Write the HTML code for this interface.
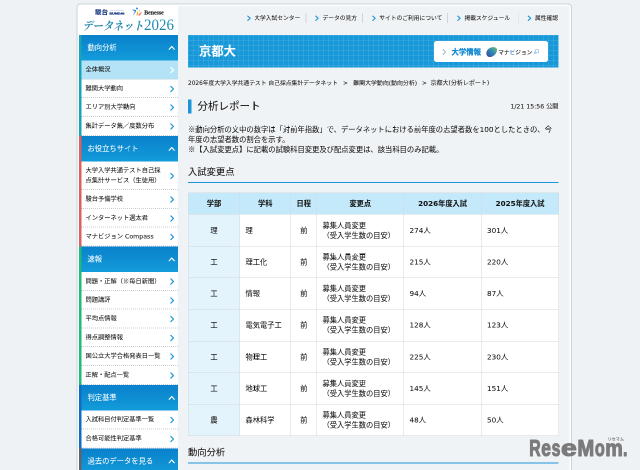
<!DOCTYPE html>
<html lang="ja">
<head>
<meta charset="utf-8">
<title>京都大 分析レポート</title>
<style>
*{box-sizing:border-box;margin:0;padding:0}
html,body{width:640px;height:470px;overflow:hidden;background:#eef2f5}
body{text-spacing-trim:space-all;font-family:"DejaVu Sans","Liberation Sans","Noto Sans CJK JP",sans-serif;color:#141414;font-weight:400;-webkit-text-stroke:.1px}
#s{will-change:transform;position:absolute;left:0;top:0;width:1280px;height:940px;transform:scale(.5);transform-origin:0 0;overflow:hidden;background:#eef2f5}
#wrap{position:absolute;left:153px;top:7px;width:991px;height:960px;border:2px solid #c9d3d9;border-radius:8px;background:#f0f3f5;box-shadow:inset 0 0 0 3px #fff}
/* sidebar */
#side{position:absolute;left:0;top:0;width:201px;height:960px;background:#fff;border-radius:7px 0 0 0}
#logo{position:relative;width:200px;height:61px}
.sec{position:relative;margin-left:3px;padding-left:5px;width:198px}
.sec .bar{position:absolute;left:0;top:0;bottom:0;width:5px}
.sh{height:51.2px;background:linear-gradient(#0a80cb,#129cda);color:#fff;font-size:14.6px;line-height:49.5px;padding-left:12px;position:relative}
.sh svg{position:absolute;right:6px;top:21px}
.si{height:37.6px;border-bottom:2px dotted #c6d0d7;font-size:12.5px;line-height:16px;padding:10px 0 0 8px;position:relative;color:#141414;background:#fff}
.si.two{height:57.4px;line-height:20px;padding-top:8.5px}
.si.act{background:#b4e3f7}
.sec:nth-of-type(4) .si{height:38.3px}
.si svg{position:absolute;right:7px;top:12px}
.si.two svg{top:22px}
/* main */
#main{position:absolute;left:221px;top:0;width:741px;height:960px}
#nav{position:absolute;left:0;top:17px;width:741px;height:20px;font-size:11.5px;white-space:nowrap;line-height:20px;color:#141414}
#nav span{display:block;position:absolute;top:0;padding-left:15px}
#nav i{position:absolute;top:0;width:1.5px;height:20px;background:#cfd6da}
#nav svg{position:absolute;left:0;top:5px}
#banner{position:absolute;left:0;top:61px;width:741px;height:65px;background-color:#1798d8;
background-image:linear-gradient(rgba(255,255,255,.09) 2px,transparent 2px),linear-gradient(90deg,rgba(255,255,255,.09) 2px,transparent 2px);background-size:10px 10px}
#banner h1{position:absolute;left:22px;top:0;line-height:65.5px;font-size:24.6px;color:#fff;font-weight:bold}
#mv{position:absolute;left:492px;top:12px;width:228px;height:42px;background:#fff;border-radius:5px}
#bc{position:absolute;left:0;top:147px;font-size:11.5px;line-height:20px;white-space:nowrap;color:#141414}
#bc span,#bc i{position:absolute;top:0;font-style:normal}
#h2{position:absolute;left:0;top:190px;height:28px;border-left:7px solid #1a96d8;padding-left:12px;font-size:21px;line-height:27px;color:#141414}
#date{position:absolute;right:0;top:194px;font-size:12.4px;line-height:20px;color:#141414}
#notes{position:absolute;left:0;top:239px;width:760px;font-size:14.6px;line-height:19.6px;color:#141414}
.h3{position:absolute;left:0;width:741px;height:37px;border-bottom:2.5px solid #1a96d8;font-size:18.6px;line-height:30px;color:#141414}
table{position:absolute;left:0;top:376.4px;width:741px;border-collapse:collapse;table-layout:fixed;font-size:14.5px;line-height:20px;color:#141414}
td,th{border:1.5px solid #d2d8dc;vertical-align:middle}
th{height:43px;background:#c3e9fa;font-weight:bold;font-size:14.4px}
td{height:63.3px;background:#fff;padding-left:11px;text-align:left}
td.c{text-align:center;padding-left:0}
td.f{background:#e4f4fc}
u{text-decoration:none;font-family:"Noto Sans CJK JP",sans-serif}
</style>
</head>
<body>
<div id="s">
<div id="wrap">
 <div id="side">
  <svg id="logo" width="200" height="61" viewBox="0 0 200 61" style="display:block">
   <defs><linearGradient id="lg" x1="0" y1="0" x2="0" y2="1"><stop offset="0" stop-color="#1a9cc2"/><stop offset="1" stop-color="#27799c"/></linearGradient></defs>
   <text x="35" y="20" font-family="'Noto Sans CJK JP',sans-serif" font-weight="900" font-size="12.500" fill="#1d3f86" textLength="26" lengthAdjust="spacingAndGlyphs">駿台</text>
   <rect x="65" y="12.200" width="28" height="0.8" fill="#a9bbdc"/>
   <text x="63.800" y="20.200" font-family="'Liberation Sans',sans-serif" font-weight="bold" font-size="6.200" fill="#1d3f86" stroke="#1d3f86" stroke-width=".7" textLength="30" lengthAdjust="spacingAndGlyphs">SUNDAI</text>
   <g>
    <path d="M109.500 9 q4 3 8 1.500 q-0.500 6 -7.500 11.500 q4.500 -6 4.500 -9 q-3 0.500 -5 -4z" fill="#1f80d4"/>
    <circle cx="119" cy="7.800" r="1.900" fill="#1f80d4"/>
    <path d="M118 22 q0.200 -6 3 -9 q0.500 4.500 -1 9z" fill="#f5a623"/>
    <path d="M121.500 22 q2 -5.500 8 -7 q-3 3 -5 7z" fill="#ee6a4a"/>
    <circle cx="124" cy="12.500" r="1.500" fill="#f7c531"/>
   </g>
   <text x="133.500" y="20.400" font-family="'Liberation Serif',serif" font-weight="bold" font-size="12.4" fill="#2a2a2a" stroke="#2a2a2a" stroke-width=".35" textLength="39" lengthAdjust="spacingAndGlyphs">Benesse</text>
   <text x="10" y="50.500" font-family="'Noto Serif CJK JP','Noto Serif CJK SC',serif" font-style="italic" font-weight="700" font-size="23.500" fill="url(#lg)" textLength="122" lengthAdjust="spacingAndGlyphs">データネット</text>
   <text x="133" y="51" font-family="'Liberation Serif',serif" font-size="32.500" fill="url(#lg)" textLength="60" lengthAdjust="spacingAndGlyphs">2026</text>
  </svg>
  <div class="sec"><div class="bar" style="background:#19a3b8"></div>
   <div class="sh">動向分析<svg width="13" height="9" viewBox="0 0 13 9"><path d="M1.5 7.5 L6.5 2 L11.5 7.5" fill="none" stroke="#fff" stroke-width="2.4" stroke-linecap="round" stroke-linejoin="round"/></svg></div>
   <div class="si act">全体概況<svg width="9" height="14" viewBox="0 0 9 14"><path d="M1.8 1.8 L7 7 L1.8 12.2" fill="none" stroke="#fff" stroke-width="2.4" stroke-linecap="round" stroke-linejoin="round"/></svg></div>
   <div class="si">難関大学動向<svg width="9" height="14" viewBox="0 0 9 14"><path d="M1.8 1.8 L7 7 L1.8 12.2" fill="none" stroke="#1a96d8" stroke-width="2.4" stroke-linecap="round" stroke-linejoin="round"/></svg></div>
   <div class="si">エリア別大学動向<svg width="9" height="14" viewBox="0 0 9 14"><path d="M1.8 1.8 L7 7 L1.8 12.2" fill="none" stroke="#1a96d8" stroke-width="2.4" stroke-linecap="round" stroke-linejoin="round"/></svg></div>
   <div class="si">集計データ集／度数分布<svg width="9" height="14" viewBox="0 0 9 14"><path d="M1.8 1.8 L7 7 L1.8 12.2" fill="none" stroke="#1a96d8" stroke-width="2.4" stroke-linecap="round" stroke-linejoin="round"/></svg></div>
  </div>
  <div class="sec"><div class="bar" style="background:#d9605e"></div>
   <div class="sh">お役立ちサイト<svg width="13" height="9" viewBox="0 0 13 9"><path d="M1.5 7.5 L6.5 2 L11.5 7.5" fill="none" stroke="#fff" stroke-width="2.4" stroke-linecap="round" stroke-linejoin="round"/></svg></div>
   <div class="si two">大学入学共通テスト自己採<br>点集計サービス（生徒用）<svg width="9" height="14" viewBox="0 0 9 14"><path d="M1.8 1.8 L7 7 L1.8 12.2" fill="none" stroke="#1a96d8" stroke-width="2.4" stroke-linecap="round" stroke-linejoin="round"/></svg></div>
   <div class="si">駿台予備学校<svg width="9" height="14" viewBox="0 0 9 14"><path d="M1.8 1.8 L7 7 L1.8 12.2" fill="none" stroke="#1a96d8" stroke-width="2.4" stroke-linecap="round" stroke-linejoin="round"/></svg></div>
   <div class="si">インターネット選太君<svg width="9" height="14" viewBox="0 0 9 14"><path d="M1.8 1.8 L7 7 L1.8 12.2" fill="none" stroke="#1a96d8" stroke-width="2.4" stroke-linecap="round" stroke-linejoin="round"/></svg></div>
   <div class="si">マナビジョン Compass<svg width="9" height="14" viewBox="0 0 9 14"><path d="M1.8 1.8 L7 7 L1.8 12.2" fill="none" stroke="#1a96d8" stroke-width="2.4" stroke-linecap="round" stroke-linejoin="round"/></svg></div>
  </div>
  <div class="sec"><div class="bar" style="background:#1fb97a"></div>
   <div class="sh">速報<svg width="13" height="9" viewBox="0 0 13 9"><path d="M1.5 7.5 L6.5 2 L11.5 7.5" fill="none" stroke="#fff" stroke-width="2.4" stroke-linecap="round" stroke-linejoin="round"/></svg></div>
   <div class="si">問題・正解（<u>※</u>毎日新聞）<svg width="9" height="14" viewBox="0 0 9 14"><path d="M1.8 1.8 L7 7 L1.8 12.2" fill="none" stroke="#1a96d8" stroke-width="2.4" stroke-linecap="round" stroke-linejoin="round"/></svg></div>
   <div class="si">問題講評<svg width="9" height="14" viewBox="0 0 9 14"><path d="M1.8 1.8 L7 7 L1.8 12.2" fill="none" stroke="#1a96d8" stroke-width="2.4" stroke-linecap="round" stroke-linejoin="round"/></svg></div>
   <div class="si">平均点情報<svg width="9" height="14" viewBox="0 0 9 14"><path d="M1.8 1.8 L7 7 L1.8 12.2" fill="none" stroke="#1a96d8" stroke-width="2.4" stroke-linecap="round" stroke-linejoin="round"/></svg></div>
   <div class="si">得点調整情報<svg width="9" height="14" viewBox="0 0 9 14"><path d="M1.8 1.8 L7 7 L1.8 12.2" fill="none" stroke="#1a96d8" stroke-width="2.4" stroke-linecap="round" stroke-linejoin="round"/></svg></div>
   <div class="si">国公立大学合格発表日一覧<svg width="9" height="14" viewBox="0 0 9 14"><path d="M1.8 1.8 L7 7 L1.8 12.2" fill="none" stroke="#1a96d8" stroke-width="2.4" stroke-linecap="round" stroke-linejoin="round"/></svg></div>
   <div class="si">正解・配点一覧<svg width="9" height="14" viewBox="0 0 9 14"><path d="M1.8 1.8 L7 7 L1.8 12.2" fill="none" stroke="#1a96d8" stroke-width="2.4" stroke-linecap="round" stroke-linejoin="round"/></svg></div>
  </div>
  <div class="sec"><div class="bar" style="background:#0b6ec4"></div>
   <div class="sh">判定基準<svg width="13" height="9" viewBox="0 0 13 9"><path d="M1.5 7.5 L6.5 2 L11.5 7.5" fill="none" stroke="#fff" stroke-width="2.4" stroke-linecap="round" stroke-linejoin="round"/></svg></div>
   <div class="si">入試科目付判定基準一覧<svg width="9" height="14" viewBox="0 0 9 14"><path d="M1.8 1.8 L7 7 L1.8 12.2" fill="none" stroke="#1a96d8" stroke-width="2.4" stroke-linecap="round" stroke-linejoin="round"/></svg></div>
   <div class="si">合格可能性判定基準<svg width="9" height="14" viewBox="0 0 9 14"><path d="M1.8 1.8 L7 7 L1.8 12.2" fill="none" stroke="#1a96d8" stroke-width="2.4" stroke-linecap="round" stroke-linejoin="round"/></svg></div>
  </div>
  <div class="sec"><div class="bar" style="background:#606468"></div>
   <div class="sh">過去のデータを見る<svg width="13" height="9" viewBox="0 0 13 9"><path d="M1.5 7.5 L6.5 2 L11.5 7.5" fill="none" stroke="#fff" stroke-width="2.4" stroke-linecap="round" stroke-linejoin="round"/></svg></div>
  </div>
 </div>
 <div id="main">
  <div id="nav"><span style="left:117.5px"><svg width="9" height="11" viewBox="0 0 9 11"><path d="M1.5 1.2 L6.5 5.5 L1.5 9.8" fill="none" stroke="#1a96d8" stroke-width="2.2" stroke-linecap="round" stroke-linejoin="round"/></svg>大学入試センター</span><i style="left:235.25px"></i><span style="left:254px"><svg width="9" height="11" viewBox="0 0 9 11"><path d="M1.5 1.2 L6.5 5.5 L1.5 9.8" fill="none" stroke="#1a96d8" stroke-width="2.2" stroke-linecap="round" stroke-linejoin="round"/></svg>データの見方</span><i style="left:348.25px"></i><span style="left:367.5px"><svg width="9" height="11" viewBox="0 0 9 11"><path d="M1.5 1.2 L6.5 5.5 L1.5 9.8" fill="none" stroke="#1a96d8" stroke-width="2.2" stroke-linecap="round" stroke-linejoin="round"/></svg>サイトのご利用について</span><i style="left:518.25px"></i><span style="left:538px"><svg width="9" height="11" viewBox="0 0 9 11"><path d="M1.5 1.2 L6.5 5.5 L1.5 9.8" fill="none" stroke="#1a96d8" stroke-width="2.2" stroke-linecap="round" stroke-linejoin="round"/></svg>掲載スケジュール</span><i style="left:660.75px"></i><span style="left:679px"><svg width="9" height="11" viewBox="0 0 9 11"><path d="M1.5 1.2 L6.5 5.5 L1.5 9.8" fill="none" stroke="#1a96d8" stroke-width="2.2" stroke-linecap="round" stroke-linejoin="round"/></svg>属性確認</span></div>
  <div id="banner"><h1>京都大</h1><div id="mv"><svg width="228" height="42" viewBox="0 0 228 42" style="display:block">
    <defs><linearGradient id="bl" x1="0" y1="1" x2="1" y2="0"><stop offset="0" stop-color="#3b3f9a"/><stop offset=".5" stop-color="#2f86b8"/><stop offset="1" stop-color="#6fc06a"/></linearGradient></defs>
    <path d="M18 16.500 L23 22 L18 27.500" fill="none" stroke="#8aa3b5" stroke-width="1.6" stroke-linecap="round" stroke-linejoin="round"/>
    <text x="35" y="27.300" font-family="'Noto Sans CJK JP',sans-serif" font-weight="bold" font-size="14.8" fill="#1088d2" stroke="#1088d2" stroke-width=".4">大学情報</text>
    <path d="M105 26.500 C103.500 21 107.500 15 114 13 C120.500 11 127 13 126 19 C125 25 120 31 113 32 C108 32.500 105.800 30 105 26.500z" fill="url(#bl)"/>
    <text x="128.500" y="26.500" font-family="'Noto Sans CJK JP',sans-serif" font-weight="500" font-size="11.3" fill="#222" textLength="68" lengthAdjust="spacing">マナ<tspan fill="#2b7fd0">ビ</tspan>ジョン</text>
    <g fill="none" stroke="#7db9e6" stroke-width="1.2"><rect x="203" y="17.500" width="6" height="6"/><path d="M201 21 v4.500 h4.500"/></g>
   </svg></div></div>
  <div id="bc"><span style="left:0;font-size:11.6px">2026年度大学入学共通テスト 自己採点集計データネット</span><i style="left:310px">&gt;</i><span style="left:330.5px;font-size:11.85px">難関大学動向(動向分析)</span><i style="left:468px">&gt;</i><span style="left:485px;font-size:12px">京都大(分析レポート)</span></div>
  <div id="h2">分析レポート</div>
  <div id="date">1/21 15:56 公開</div>
  <div id="notes"><u>※</u>動向分析の文中の数字は「対前年指数」で、データネットにおける前年度の志望者数を100としたときの、今<br>年度の志望者数の割合を示す。<br><u>※</u>【入試変更点】に記載の試験科目変更及び配点変更は、該当科目のみ記載。</div>
  <div class="h3" style="top:320px">入試変更点</div>
  <table><colgroup><col style="width:103px"><col style="width:102px"><col style="width:52px"><col style="width:174px"><col style="width:155px"><col style="width:155px"></colgroup>
<tr><th>学部</th><th>学科</th><th>日程</th><th>変更点</th><th>2026年度入試</th><th>2025年度入試</th></tr>
<tr><td class="c f">理</td><td>理</td><td class="c">前</td><td>募集人員変更<br>（受入学生数の目安）</td><td>274人</td><td>301人</td></tr>
<tr><td class="c f">工</td><td>理工化</td><td class="c">前</td><td>募集人員変更<br>（受入学生数の目安）</td><td>215人</td><td>220人</td></tr>
<tr><td class="c f">工</td><td>情報</td><td class="c">前</td><td>募集人員変更<br>（受入学生数の目安）</td><td>94人</td><td>87人</td></tr>
<tr><td class="c f">工</td><td>電気電子工</td><td class="c">前</td><td>募集人員変更<br>（受入学生数の目安）</td><td>128人</td><td>123人</td></tr>
<tr><td class="c f">工</td><td>物理工</td><td class="c">前</td><td>募集人員変更<br>（受入学生数の目安）</td><td>225人</td><td>230人</td></tr>
<tr><td class="c f">工</td><td>地球工</td><td class="c">前</td><td>募集人員変更<br>（受入学生数の目安）</td><td>145人</td><td>151人</td></tr>
<tr><td class="c f">農</td><td>森林科学</td><td class="c">前</td><td>募集人員変更<br>（受入学生数の目安）</td><td>48人</td><td>50人</td></tr>
</table>
  <div class="h3" style="top:880.5px">動向分析</div>
 </div>
</div>
<svg id="wm" width="210" height="60" viewBox="0 0 210 60" style="position:absolute;left:1054px;top:862px;opacity:.86">
  <g font-family="'Liberation Sans',sans-serif" font-weight="bold" font-size="47" fill="#686868" stroke="#686868" stroke-width="2.2" stroke-linejoin="round"><text x="4.5" y="49.5" textLength="22.9" lengthAdjust="spacingAndGlyphs">R</text><text x="28.6" y="49.5" textLength="19.4" lengthAdjust="spacingAndGlyphs">e</text><text x="49.2" y="49.5" textLength="17.6" lengthAdjust="spacingAndGlyphs">s</text><text x="68.0" y="49.5" textLength="31.6" lengthAdjust="spacingAndGlyphs">e</text><text x="100.8" y="49.5" textLength="33.8" lengthAdjust="spacingAndGlyphs">M</text><text x="135.8" y="49.5" textLength="19.8" lengthAdjust="spacingAndGlyphs">o</text><text x="156.4" y="49.5" textLength="35.1" lengthAdjust="spacingAndGlyphs">m</text><text x="192.0" y="49.5" textLength="9.0" lengthAdjust="spacingAndGlyphs">.</text></g>
  <text x="161" y="18.500" font-family="'Noto Sans CJK JP',sans-serif" font-weight="bold" font-size="8" fill="#686868" textLength="33" lengthAdjust="spacingAndGlyphs">リセマム</text>
 </svg>
</div>
</body>
</html>
